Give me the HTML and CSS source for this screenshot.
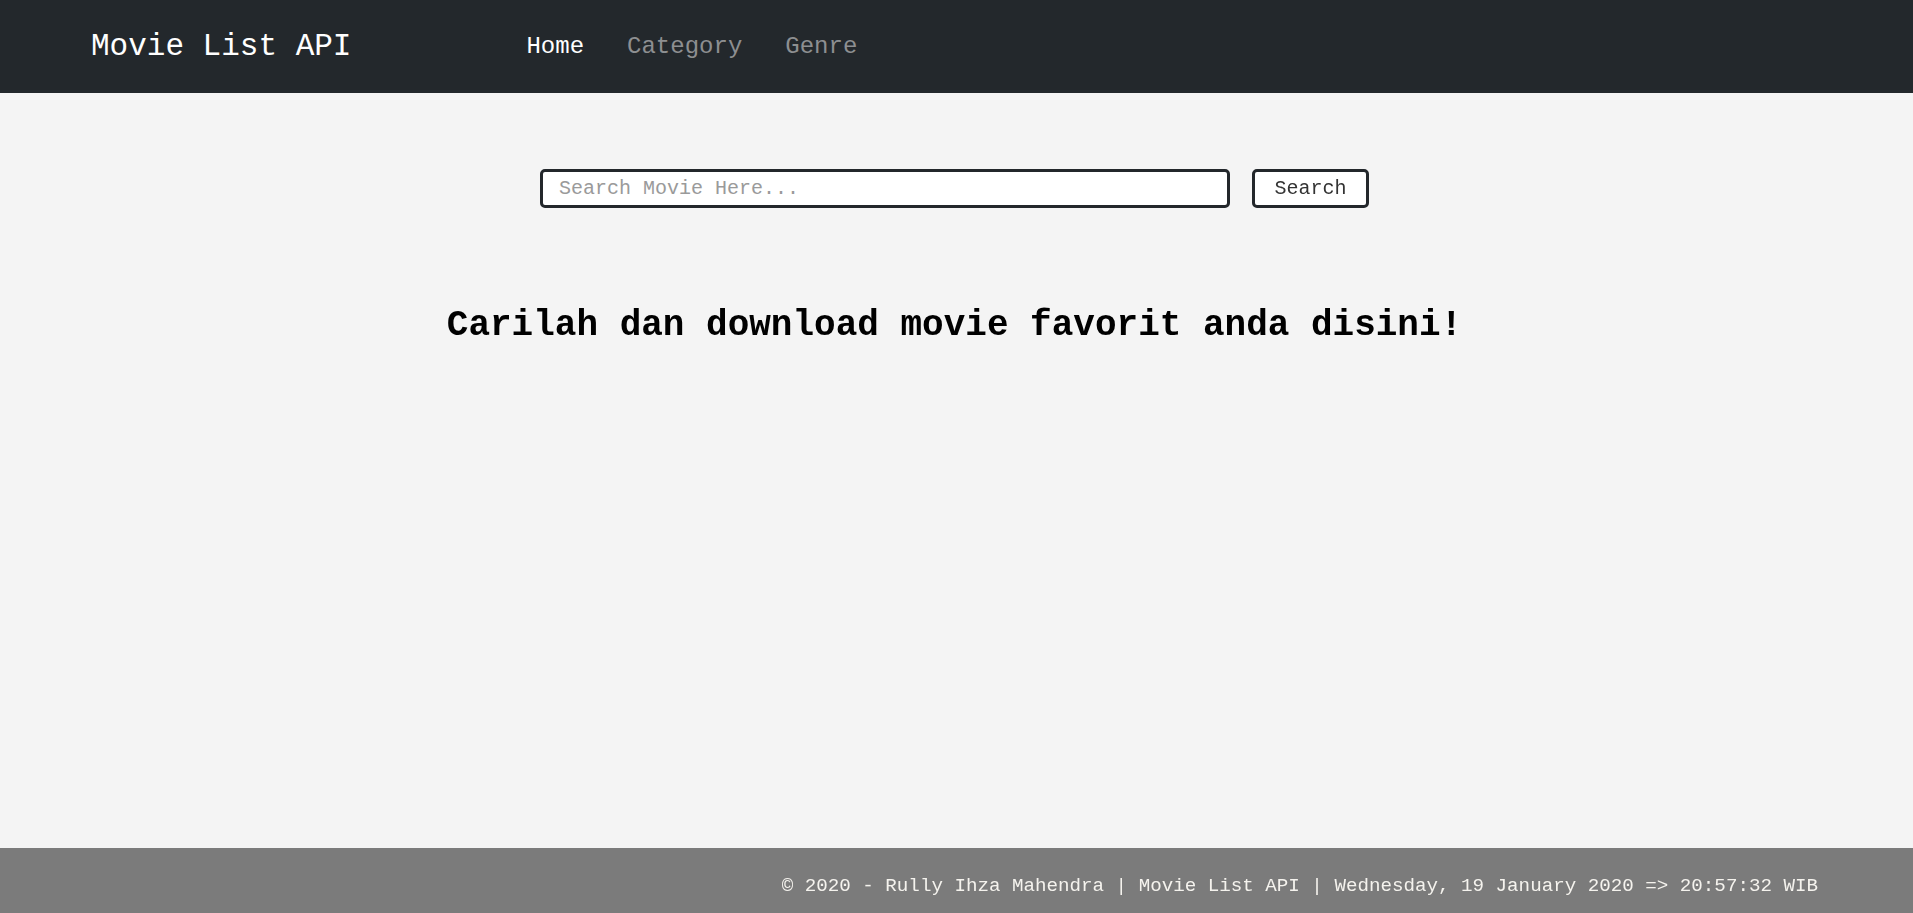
FILE: index.html
```html
<!DOCTYPE html>
<html lang="id">
<head>
<meta charset="utf-8">
<title>Movie List API</title>
<link rel="stylesheet" href="styles.css">
</head>
<body>
<div class="page">
  <nav class="navbar">
    <a class="brand" href="#">Movie List API</a>
    <ul class="nav-links">
      <li><a class="nav-link active" href="#">Home</a></li>
      <li><a class="nav-link" href="#">Category</a></li>
      <li><a class="nav-link" href="#">Genre</a></li>
    </ul>
  </nav>
  <main class="main">
    <form class="search-form" onsubmit="return false;">
      <input class="search-input" type="text" placeholder="Search Movie Here..." autofocus>
      <button class="search-btn" type="submit">Search</button>
    </form>
    <h1 class="headline">Carilah dan download movie favorit anda disini!</h1>
  </main>
  <footer class="footer">
    <p class="footer-text">© 2020 - Rully Ihza Mahendra | Movie List API | Wednesday, 19 January 2020 =&gt; 20:57:32 WIB</p>
  </footer>
</div>
</body>
</html>
```
FILE: styles.css
```css
* { box-sizing: border-box; }
html, body { margin: 0; padding: 0; }
body {
  font-family: "Liberation Mono", "Courier New", monospace;
  background: #f4f4f4;
  color: #000;
}
.page {
  min-height: 100vh;
  display: flex;
  flex-direction: column;
}
.navbar {
  height: 93px;
  background: #23282c;
  display: flex;
  align-items: center;
  padding-left: 91px;
}
.brand {
  font-size: 31px;
  color: #ffffff;
  text-decoration: none;
  margin-right: 175px;
}
.nav-links {
  list-style: none;
  margin: 0;
  padding: 0;
  display: flex;
  gap: 43px;
}
.nav-link {
  font-size: 24px;
  color: #8d8f91;
  text-decoration: none;
}
.nav-link.active { color: #ffffff; }
.main {
  flex: 1;
  display: flex;
  flex-direction: column;
  align-items: center;
  padding-top: 76px;
  padding-right: 4px;
}
.search-form {
  display: flex;
  gap: 22px;
  height: 39px;
}
.search-input {
  width: 690px;
  height: 100%;
  border: 3px solid #23272b;
  border-radius: 5px;
  background: #fff;
  padding: 0 12px 0 16px;
  font-family: inherit;
  font-size: 20px;
  color: #333;
  outline: none;
}
.search-input::placeholder { color: #9a9a9a; }
.search-btn {
  width: 117px;
  height: 100%;
  border: 3px solid #23272b;
  border-radius: 5px;
  background: #fff;
  font-family: inherit;
  font-size: 20px;
  color: #333;
  padding: 0;
  cursor: pointer;
}
.headline {
  margin: 97px 0 0;
  font-size: 36px;
  font-weight: bold;
  line-height: normal;
  text-align: center;
}
.footer {
  height: 65px;
  background: #7b7b7b;
  padding: 27px 95px 0;
}
.footer-text {
  margin: 0;
  text-align: right;
  font-size: 19.2px;
  color: #f5f3ee;
  line-height: normal;
}
```
